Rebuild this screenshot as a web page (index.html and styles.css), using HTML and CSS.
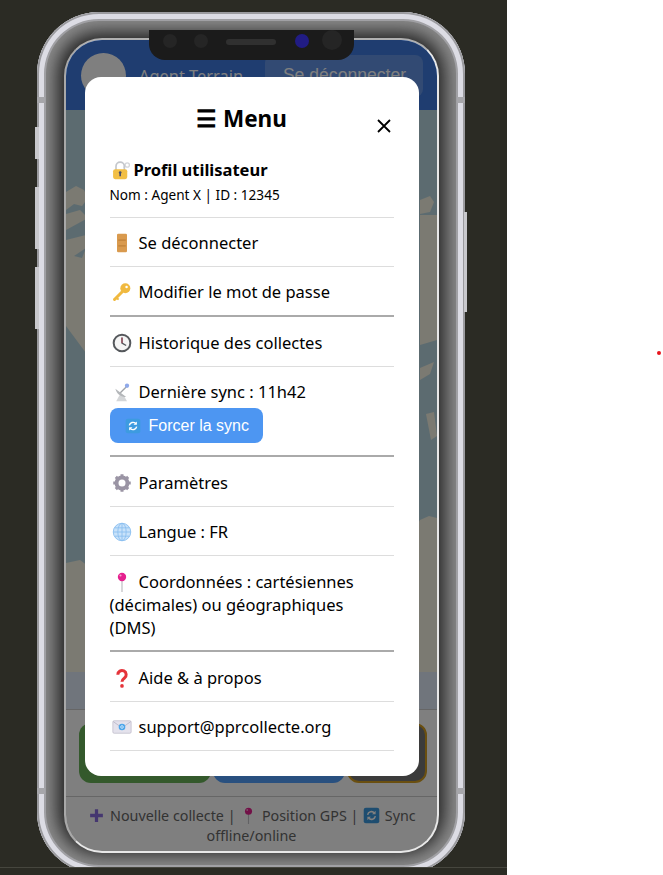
FILE: index.html
```html
<!DOCTYPE html>
<html lang="fr">
<head>
    <meta charset="UTF-8">
    <meta name="viewport" content="width=device-width, initial-scale=1.0">
    <title>PPR Collecte</title>
    <link rel="stylesheet" href="styles.css">
</head>
<body>
    <!-- Icons used in the menu and the legend -->
    <svg class="icon-defs" aria-hidden="true">
        <symbol id="i-lock" viewBox="0 0 24 24">
            <circle cx="19.500" cy="6" r="2.600" fill="none" stroke="#d4d6da" stroke-width="1.600"/>
            <path d="M15 9l3-2" stroke="#d4d6da" stroke-width="1.600"/>
            <path d="M6 12V7.500a5 5 0 0 1 10 0V12" fill="none" stroke="#c4c7cc" stroke-width="2"/>
            <rect x="2.500" y="11" width="17" height="12" rx="2.500" fill="#f2bf45"/>
            <rect x="10" y="14.500" width="2" height="5" fill="#4b4f6a"/>
            <circle cx="11" cy="15" r="1.600" fill="#4b4f6a"/>
        </symbol>
        <symbol id="i-door" viewBox="0 0 24 24">
            <rect x="6" y="1" width="12" height="22" rx="1.500" fill="#d99a4e"/>
            <path d="M7.500 8.500h9M7.500 15.500h9" stroke="#b97a33" stroke-width="1.200"/>
        </symbol>
        <symbol id="i-key" viewBox="0 0 24 24">
            <path d="M3 21l9-9" stroke="#f0b93f" stroke-width="3.600" stroke-linecap="round"/>
            <path d="M5 19l3 2" stroke="#f0b93f" stroke-width="2.400"/>
            <circle cx="16" cy="7.500" r="6" fill="#f0b93f"/>
            <circle cx="17.500" cy="6" r="1.500" fill="#fff"/>
        </symbol>
        <symbol id="i-clock" viewBox="0 0 24 24">
            <circle cx="12" cy="12" r="10" fill="#f4f4f4" stroke="#55585c" stroke-width="2.400"/>
            <path d="M12 5.500V12l5 3" fill="none" stroke="#55585c" stroke-width="1.700"/>
            <path d="M12 5.500V12" stroke="#b0324a" stroke-width="1"/>
        </symbol>
        <symbol id="i-dish" viewBox="0 0 24 24">
            <path d="M5 23h13l-4-7H9z" fill="#d4d6d8"/>
            <path d="M4 8c2 7 7 10 13 10z" fill="#b4b7ba"/>
            <path d="M10 13l7-7" stroke="#a0a3a7" stroke-width="1.600"/>
            <circle cx="18" cy="4.500" r="2.600" fill="#8fa9ea"/>
        </symbol>
        <symbol id="i-sync" viewBox="0 0 24 24">
            <rect x="1" y="1" width="22" height="22" rx="3" fill="#3d9be0"/>
            <path d="M6.500 11a5.600 5.600 0 0 1 9.600-2.600M17.500 13a5.600 5.600 0 0 1-9.600 2.600" fill="none" stroke="#fff" stroke-width="2.200"/>
            <path d="M17.800 5.200v5h-5zM6.200 18.800v-5h5z" fill="#fff"/>
        </symbol>
        <symbol id="i-gear" viewBox="0 0 24 24">
            <circle cx="12" cy="12" r="6.600" fill="none" stroke="#9a94a4" stroke-width="4.600"/>
            <path d="M12 1.500v21M1.500 12h21M4.600 4.600l14.800 14.800M19.400 4.600L4.600 19.400" stroke="#9a94a4" stroke-width="3.600"/>
            <circle cx="12" cy="12" r="4.200" fill="#fff"/>
        </symbol>
        <symbol id="i-globe" viewBox="0 0 24 24">
            <circle cx="12" cy="12" r="10.500" fill="#c8e2fa"/>
            <path d="M1.500 12h21M3 7h18M3 17h18M12 1.500v21" stroke="#8cc0f0" stroke-width="1.100"/>
            <ellipse cx="12" cy="12" rx="5" ry="10.500" fill="none" stroke="#8cc0f0" stroke-width="1.100"/>
            <circle cx="12" cy="12" r="10.500" fill="none" stroke="#8cc0f0" stroke-width="1.100"/>
        </symbol>
        <symbol id="i-pin" viewBox="0 0 24 24">
            <path d="M12 10v14" stroke="#c4c4c8" stroke-width="1.600"/>
            <circle cx="12" cy="6" r="5" fill="#e5208e"/>
            <circle cx="10.200" cy="4.200" r="1.300" fill="#f8a0d0"/>
        </symbol>
        <symbol id="i-help" viewBox="0 0 24 24">
            <path d="M7 8a5 5 0 1 1 8 4c-2 1.500-3 2.500-3 4.500" fill="none" stroke="#e5343a" stroke-width="3.600"/>
            <circle cx="12" cy="21.500" r="2.200" fill="#e5343a"/>
        </symbol>
        <symbol id="i-mail" viewBox="0 0 24 24">
            <rect x="1" y="4.500" width="22" height="15" rx="1.500" fill="#e4e2ec" stroke="#b9b6c6" stroke-width="0.800"/>
            <path d="M1.500 5.500L12 13l10.500-7.500" fill="none" stroke="#b9b6c6" stroke-width="1"/>
            <circle cx="12" cy="12" r="4" fill="#4ea6ea"/>
            <circle cx="12" cy="12" r="1.600" fill="none" stroke="#fff" stroke-width="0.800"/>
        </symbol>
        <symbol id="i-plus" viewBox="0 0 24 24">
            <path d="M12 3v18M3 12h18" stroke="#8a6fe0" stroke-width="4.600"/>
        </symbol>
    </svg>

    <div class="backdrop">
        <div class="device-area">
            <div class="phone">
                <span class="side-btn side-mute"></span>
                <span class="side-btn side-vol-up"></span>
                <span class="side-btn side-vol-down"></span>
                <span class="side-btn side-power"></span>
                <span class="band band-tl"></span>
                <span class="band band-tr"></span>
                <span class="band band-bl"></span>
                <span class="band band-br"></span>

                <div class="notch">
                    <span class="lens lens-a"></span>
                    <span class="lens lens-b"></span>
                    <span class="speaker"></span>
                    <span class="lens lens-blue"></span>
                    <span class="lens lens-big"></span>
                </div>

                <div class="screen">
                    <header class="app-header">
                        <div class="avatar"></div>
                        <span class="agent-name">Agent Terrain</span>
                        <button class="logout-button">Se déconnecter</button>
                    </header>

                    <svg class="map" viewBox="0 0 371 562" preserveAspectRatio="none" aria-hidden="true">
                        <rect width="371" height="562" fill="#b9d7e1"/>
                        <path d="M0 82l10-6 8 4 4 8-6 8-8-2-8 6zM0 104l14-4 8 8-22 12zM0 130l24-6 30 10 60 170-94-61-20-27z" fill="#f6f4e4"/>
                        <path d="M4 118l18 2-20 6zM8 146l12-8-4 10z" fill="#b9d7e1"/>
                        <path d="M371 105h-17v130l17-5zM354 90l10-4 4 6-4 10-10 2z" fill="#f6f4e4"/>
                        <path d="M354 258l14-6-4 12-10 6zM360 304l8-2 3 24-6 4z" fill="#f6f4e4"/>
                        <path d="M0 453l14-3 8 6 6 10 80 96H0zM371 408l-8-2-9 4-90 152h107z" fill="#f6f4e4"/>
                    </svg>
                    <div class="map-strip"></div>

                    <div class="actions">
                        <div class="action action-green"></div>
                        <div class="action action-blue"></div>
                        <div class="action action-dark"></div>
                    </div>

                    <p class="legend">
                        <svg class="legend-icon"><use href="#i-plus"/></svg> Nouvelle collecte |
                        <svg class="legend-icon"><use href="#i-pin"/></svg> Position GPS |
                        <svg class="legend-icon"><use href="#i-sync"/></svg> Sync<br>offline/online
                    </p>

                    <div class="overlay">
                        <div class="menu">
                            <div class="menu-head">
                                <h2 class="menu-title">☰ Menu</h2>
                                <button class="menu-close" aria-label="Fermer">
                                    <svg width="14" height="14" viewBox="0 0 14 14"><path d="M1 1l12 12M13 1L1 13" stroke="#000" stroke-width="1.800"/></svg>
                                </button>
                            </div>

                            <div class="profile">
                                <div class="profile-title"><svg class="emoji emoji-tight"><use href="#i-lock"/></svg>Profil utilisateur</div>
                                <div class="profile-sub">Nom : Agent X | ID : 12345</div>
                            </div>

                            <div class="row"><svg class="emoji"><use href="#i-door"/></svg>Se déconnecter</div>
                            <div class="row row-end"><svg class="emoji"><use href="#i-key"/></svg>Modifier le mot de passe</div>

                            <div class="row"><svg class="emoji"><use href="#i-clock"/></svg>Historique des collectes</div>
                            <div class="row row-end row-sync">
                                <svg class="emoji"><use href="#i-dish"/></svg>Dernière sync : 11h42
                                <button class="sync-button"><svg class="sync-icon"><use href="#i-sync"/></svg>Forcer la sync</button>
                            </div>

                            <div class="row"><svg class="emoji"><use href="#i-gear"/></svg>Paramètres</div>
                            <div class="row"><svg class="emoji"><use href="#i-globe"/></svg>Langue : FR</div>
                            <div class="row row-end row-wrap"><svg class="emoji"><use href="#i-pin"/></svg>Coordonnées : cartésiennes (décimales) ou géographiques (DMS)</div>

                            <div class="row"><svg class="emoji"><use href="#i-help"/></svg>Aide &amp; à propos</div>
                            <div class="row"><svg class="emoji"><use href="#i-mail"/></svg>support@pprcollecte.org</div>
                        </div>
                    </div>
                </div>
            </div>
        </div>
    </div>

    <span class="red-dot"></span>
</body>
</html>
```

FILE: styles.css
```css
/* Basic styles */
body {
    margin: 0;
    background: #fff;
    font-family: "Noto Sans", Arial, sans-serif;
    color: #000;
}
.icon-defs {
    display: none;
}
.backdrop {
    width: 507px;
    height: 875px;
    background: #2b2b24;
    overflow: hidden;
}
.device-area {
    height: 868px;
    padding: 12px 0 0 37px;
    box-sizing: border-box;
    border-bottom: 1px solid #46463e;
    overflow: hidden;
}

/* Phone frame */
.phone {
    position: relative;
    width: 428px;
    height: 862px;
    box-sizing: border-box;
    padding: 26px 26px 21px 27px;
    border-radius: 62px;
    background: #222;
    box-shadow:
        inset 0 0 0 2px #9b9b9f,
        inset 0 0 0 7px #dcdce4,
        inset 0 0 0 9px #a0a0a4,
        inset 0 0 18px 20px #8c8c8c;
}
.side-btn {
    position: absolute;
    width: 4px;
    background: #c8c8cc;
}
.side-mute { left: -2px; top: 115px; height: 32px; }
.side-vol-up { left: -2px; top: 175px; height: 62px; }
.side-vol-down { left: -2px; top: 255px; height: 62px; }
.side-power { left: 427px; top: 200px; width: 3px; height: 100px; }
.band {
    position: absolute;
    width: 8px;
    height: 6px;
    background: #a6a6aa;
}
.band-tl { left: 0; top: 85px; }
.band-tr { right: 0; top: 85px; }
.band-bl { left: 0; top: 776px; }
.band-br { right: 0; top: 776px; }

.notch {
    position: absolute;
    z-index: 3;
    left: 112px;
    top: 18px;
    width: 205px;
    height: 30px;
    background: #1b1b1b;
    border-radius: 0 0 16px 16px;
}
.lens {
    position: absolute;
    top: 4px;
    width: 14px;
    height: 14px;
    border-radius: 50%;
    background: #252525;
}
.lens-a { left: 14px; }
.lens-b { left: 45px; }
.lens-blue { left: 146px; background: #211c84; }
.lens-big { left: 173px; top: 0; width: 20px; height: 20px; }
.speaker {
    position: absolute;
    left: 77px;
    top: 9px;
    width: 50px;
    height: 6px;
    border-radius: 3px;
    background: #303030;
}

/* Screen */
.screen {
    position: relative;
    height: 815px;
    box-sizing: border-box;
    display: flex;
    flex-direction: column;
    border: 2px solid;
    border-color: #b0b0b0 #e8e8e8 #e8e8e8 #a8a8a8;
    border-radius: 38px;
    background: #fff;
    overflow: hidden;
}
.app-header {
    flex: none;
    height: 70px;
    box-sizing: border-box;
    display: flex;
    align-items: center;
    padding: 1px 14px 0 15px;
    background: #3e7be0;
    color: #fff;
}
.avatar {
    width: 45px;
    height: 45px;
    border-radius: 50%;
    background: #fff;
}
.agent-name {
    margin-left: 13px;
    font-size: 16.4px;
}
.logout-button {
    margin-left: auto;
    width: 158px;
    height: 42px;
    padding: 0 0 0 1px;
    border: none;
    border-radius: 8px;
    background: rgba(255, 255, 255, 0.2);
    color: #fff;
    font-family: "Liberation Sans", Arial, sans-serif;
    font-size: 17.6px;
}
.map {
    flex: 1;
    min-height: 0;
    display: block;
    width: 100%;
}
.map-strip {
    flex: none;
    height: 37px;
    background: #e0eaf8;
    border-bottom: 1px solid #ccc;
}
.actions {
    flex: none;
    display: grid;
    grid-template-columns: 132px 132px 1fr;
    gap: 2px;
    padding: 13px 10px 13px 13px;
    border-bottom: 1px solid #ccc;
}
.action {
    height: 60px;
    box-sizing: border-box;
    border-radius: 12px;
}
.action-green { background: #68b258; }
.action-blue { background: #52a0fe; }
.action-dark { background: #767676; border: 2px solid #d49e20; }
.legend {
    flex: none;
    height: 54px;
    box-sizing: border-box;
    margin: 0;
    padding: 9px 12px 0;
    text-align: center;
    font-size: 14.3px;
    line-height: 20px;
    color: #666;
}
.legend-icon {
    width: 17px;
    height: 17px;
    margin: 0 1px;
    vertical-align: -3px;
}

/* Menu */
.overlay {
    position: absolute;
    inset: 0;
    z-index: 2;
    display: flex;
    align-items: flex-start;
    justify-content: center;
    padding-top: 37px;
    background: rgba(0, 0, 0, 0.5);
}
.menu {
    width: 334px;
    box-sizing: border-box;
    padding: 24px 25px 25px;
    background: #fff;
    border-radius: 16px;
    font-size: 16.5px;
}
.menu-head {
    display: flex;
    align-items: flex-start;
}
.menu-title {
    flex: 1;
    margin: 0;
    text-align: center;
    font-size: 22.5px;
    font-weight: 700;
    line-height: 36px;
}
.menu-close {
    width: 20px;
    height: 20px;
    margin-top: 16px;
    padding: 0;
    border: none;
    background: none;
}
.profile {
    margin-top: 21px;
    padding-bottom: 10px;
    border-bottom: 1px solid #ddd;
}
.profile-title {
    font-weight: 700;
    line-height: 24px;
}
.profile-sub {
    margin-top: 1px;
    font-size: 13.6px;
    line-height: 24px;
}
.row {
    padding: 13px 0 11px;
    border-bottom: 1px solid #ddd;
    line-height: 24px;
}
.row-end {
    border-bottom: 2px solid #aaa;
}
.row-end + .row {
    padding-top: 14px;
}
.row-sync {
    padding-bottom: 12px;
}
.row-wrap {
    padding: 14px 0 11px;
    line-height: 23px;
}
.emoji {
    width: 20px;
    height: 20px;
    margin: 0 7px 0 2px;
    vertical-align: -4px;
}
.emoji-tight {
    margin: 0 3px 0 1px;
}
.sync-button {
    display: flex;
    align-items: center;
    height: 35px;
    margin-top: 4px;
    padding: 0 14px 0 15px;
    border: none;
    border-radius: 8px;
    background: #4d96f2;
    color: #fff;
    font-family: "Liberation Sans", Arial, sans-serif;
    font-size: 16px;
}
.sync-icon {
    width: 16px;
    height: 16px;
    margin-right: 8px;
}
.red-dot {
    position: absolute;
    left: 657px;
    top: 351px;
    width: 4px;
    height: 4px;
    border-radius: 50%;
    background: #e8141c;
}
```
